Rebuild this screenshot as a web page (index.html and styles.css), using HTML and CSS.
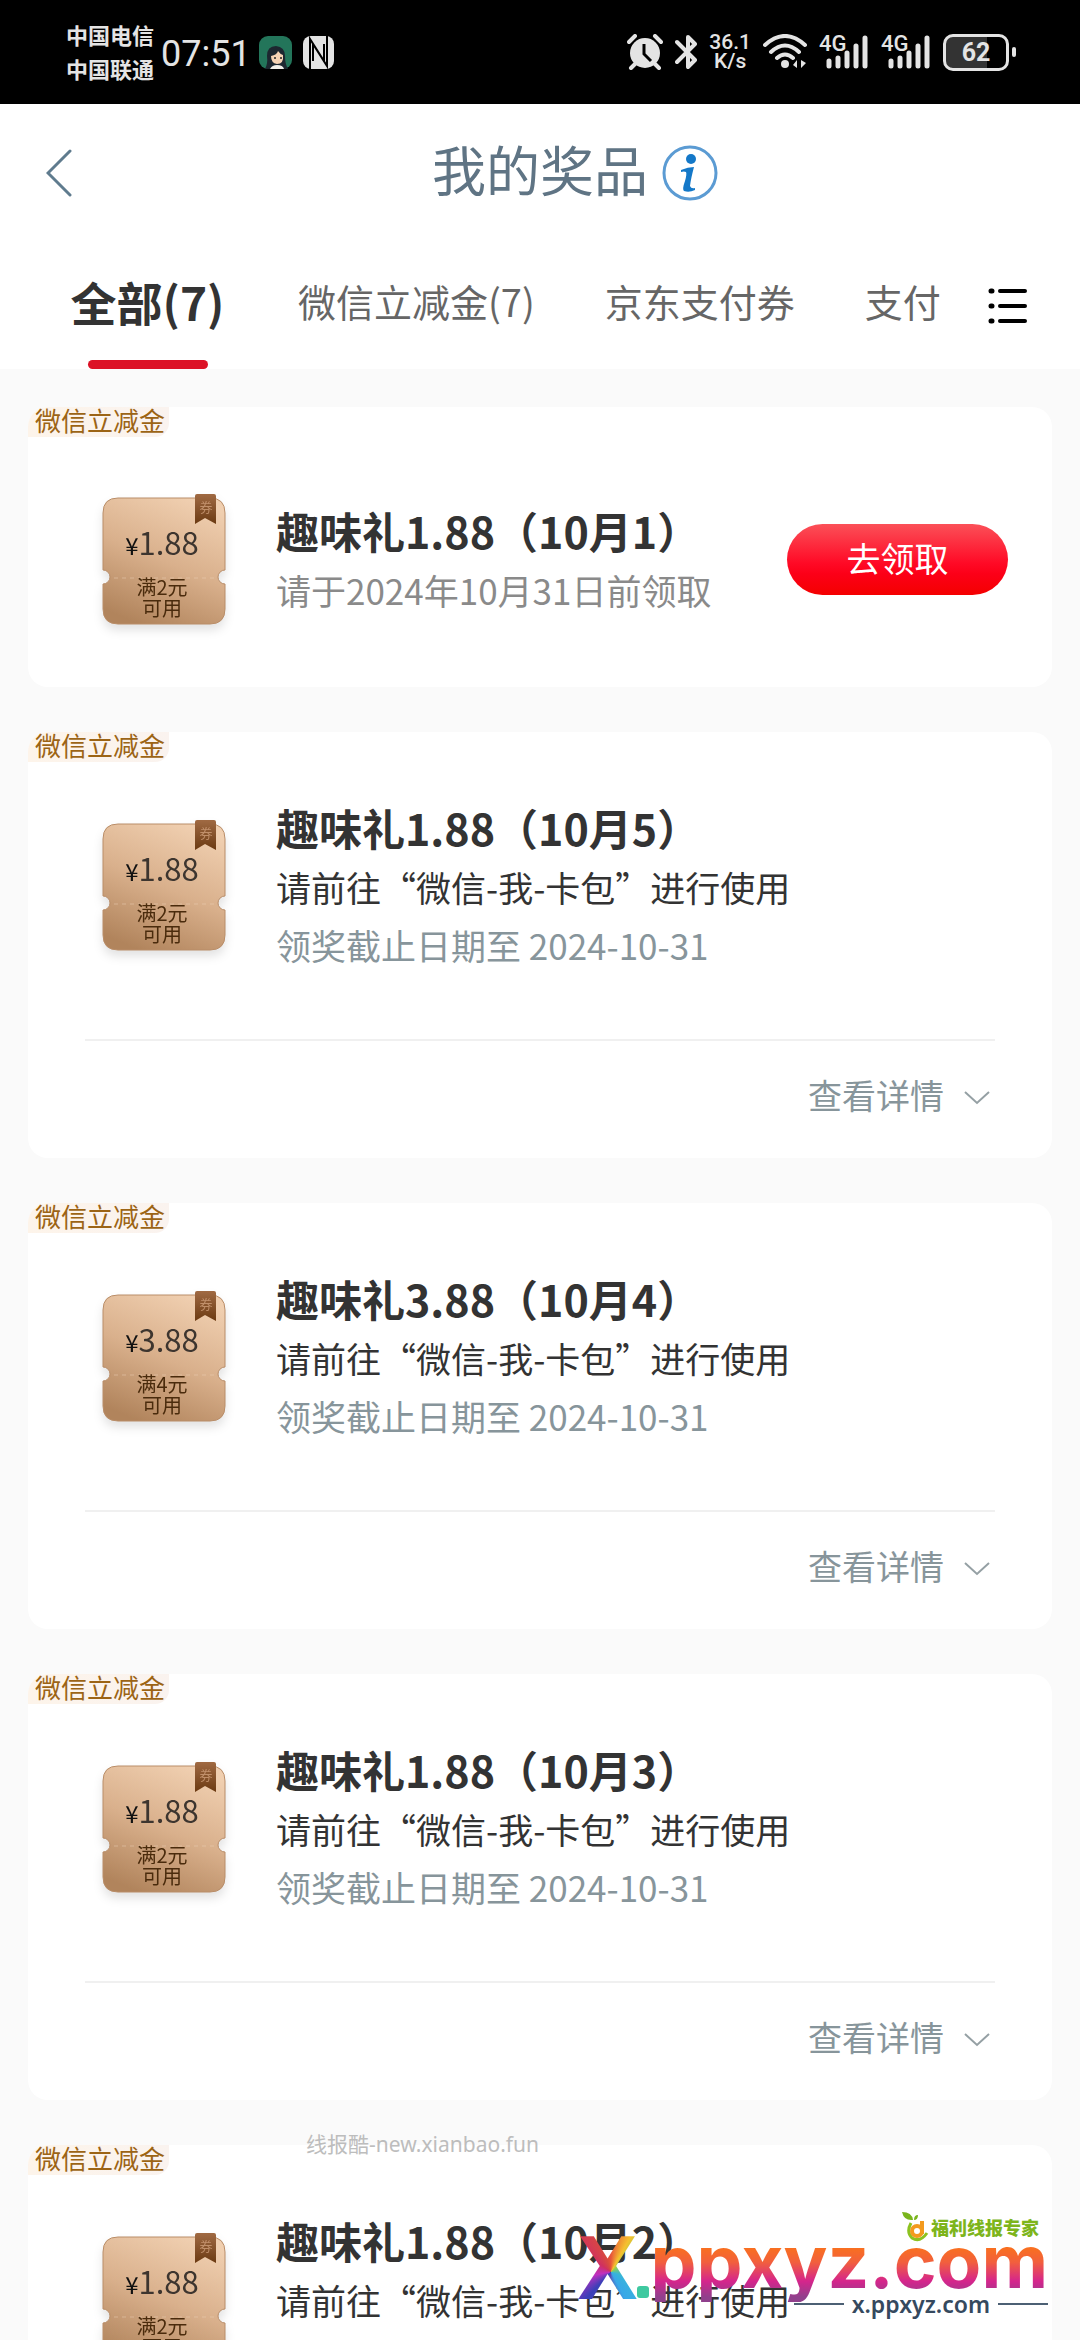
FILE: index.html
```html
<!DOCTYPE html>
<html lang="zh-CN">
<head>
<meta charset="utf-8">
<meta name="viewport" content="width=device-width, initial-scale=1">
<title>我的奖品</title>
<link rel="stylesheet" href="styles.css">
</head>
<body>
<svg class="sprite" aria-hidden="true">
  <defs>
    <linearGradient id="bronze" x1="0.7" y1="0" x2="0.3" y2="1">
      <stop offset="0" stop-color="#f0cfb0"/>
      <stop offset="0.5" stop-color="#d9b08c"/>
      <stop offset="1" stop-color="#b1845c"/>
    </linearGradient>
    <linearGradient id="ribbon" x1="0" y1="0" x2="0" y2="1">
      <stop offset="0" stop-color="#a06a43"/>
      <stop offset="1" stop-color="#6b3a12"/>
    </linearGradient>
  </defs>
  <symbol id="ticket" viewBox="0 0 124 131">
    <path d="M16 4H108Q123 4 123 19V76A7 7 0 0 0 123 90V115Q123 130 108 130H16Q1 130 1 115V90A7 7 0 0 0 1 76V19Q1 4 16 4Z" fill="url(#bronze)" stroke="#b98d68" stroke-width="1"/>
    <path d="M12 84H112" stroke="#ecd0b6" stroke-width="1" stroke-dasharray="4 4" opacity="0.5"/>
    <path d="M93 2Q93 0 95 0H112Q114 0 114 2V30L103 24L93 30Z" fill="url(#ribbon)"/>
    <text x="104" y="18" font-size="13" text-anchor="middle" fill="#d8a884" opacity="0.7">券</text>
  </symbol>
  <symbol id="down" viewBox="0 0 26 14">
    <path d="M1 1L13 12L25 1" fill="none" stroke="#95a0a4" stroke-width="2"/>
  </symbol>
  <symbol id="bars" viewBox="0 0 50 36">
    <g stroke="#e4e4e4" stroke-width="5" stroke-linecap="round">
      <path d="M10 27V32M19 24V32M28 19V32M37 12V32M46 4V32"/>
    </g>
    <text x="0" y="17" font-size="22" font-weight="500" fill="#e4e4e4" class="net">4G</text>
  </symbol>
</svg>

<div class="app">
  <div class="status">
    <div class="carriers"><span>中国电信</span><span>中国联通</span></div>
    <time class="clock">07:51</time>
    <svg class="avatar" viewBox="0 0 33 33" aria-hidden="true">
      <rect width="33" height="33" rx="9" fill="#23755a"/>
      <path d="M6 33Q9 28 8 20Q8 10 17 10Q26 11 26 20Q26 28 29 33Z" fill="#1d2730"/>
      <path d="M12 20Q18 19 19 15Q21 18 24 19Q25 28 18 28Q12 27 12 20Z" fill="#f6d3b4"/>
      <path d="M11 33Q13 29 18 29Q24 29 25 33Z" fill="#f3f0ea"/>
      <circle cx="16" cy="22" r="1" fill="#222"/><circle cx="22" cy="22" r="1" fill="#222"/>
    </svg>
    <svg class="nfc" viewBox="0 0 31 33" aria-hidden="true">
      <rect width="31" height="33" rx="8" fill="#e4e4e4"/>
      <path d="M7 33V3L21 25V8M24 0V30L10 8V25" fill="none" stroke="#000" stroke-width="2"/>
    </svg>
    <div class="indicators">
      <svg class="alarm" viewBox="0 0 36 36" aria-hidden="true">
        <circle cx="18" cy="19" r="15" fill="#e4e4e4"/>
        <path d="M2 8L8 2M34 8L28 2M8 30L4 34M28 30L32 34" stroke="#e4e4e4" stroke-width="4" stroke-linecap="round"/>
        <path d="M17 10V20L24 27" fill="none" stroke="#000" stroke-width="3"/>
      </svg>
      <svg class="bluetooth" viewBox="0 0 22 36" aria-hidden="true">
        <path d="M2 8L20 26L13 33V3L20 10L2 28" fill="none" stroke="#e4e4e4" stroke-width="4" stroke-linejoin="round" stroke-linecap="round"/>
      </svg>
      <div class="speed"><span>36.1</span><span>K/s</span></div>
      <svg class="wifi" viewBox="0 0 44 36" aria-hidden="true">
        <g fill="none" stroke="#e4e4e4" stroke-width="4" stroke-linecap="round">
          <path d="M2 11Q22 -7 42 11M8 18Q22 5 36 18M14 24Q22 17 30 24"/>
        </g>
        <circle cx="22" cy="30" r="4" fill="#e4e4e4"/>
        <path d="M34 26V34L30 31ZM38 26L43 29L38 34Z" fill="#e4e4e4"/>
      </svg>
      <svg class="signal" aria-label="4G"><use href="#bars"/></svg>
      <svg class="signal" aria-label="4G"><use href="#bars"/></svg>
      <div class="battery"><span class="cell">62</span><span class="nub"></span></div>
    </div>
  </div>

  <header class="header">
    <button class="back" aria-label="返回">
      <svg viewBox="0 0 26 48"><path d="M24 2L2 24L24 46" fill="none" stroke="#5f7b8e" stroke-width="3" stroke-linecap="round"/></svg>
    </button>
    <h1>我的奖品</h1>
    <button class="info" aria-label="说明">
      <svg viewBox="0 0 56 56">
        <circle cx="28" cy="28" r="26" fill="#fff" stroke="#5b9bd3" stroke-width="3"/>
        <circle cx="29" cy="14" r="5" fill="#1478c8"/>
        <path d="M19 25Q26 22 32 22Q29 33 28 41Q29 44 33 43L33 45Q27 48 22 46Q20 44 23 36Q25 29 24 27Q22 26 19 27Z" fill="#1478c8"/>
      </svg>
    </button>
  </header>

  <nav class="tabs">
    <div class="tablist">
      <button class="tab active">全部(7)</button>
      <button class="tab">微信立减金(7)</button>
      <button class="tab">京东支付券</button>
      <button class="tab">支付</button>
    </div>
    <button class="menu" aria-label="全部分类">
      <svg viewBox="0 0 40 38"><path d="M12 4H37M12 19H37M12 34H37" stroke="#000" stroke-width="4" stroke-linecap="round"/><path d="M3 4H4M3 19H4M3 34H4" stroke="#000" stroke-width="5" stroke-linecap="round"/></svg>
    </button>
  </nav>

  <main class="list">
    <article class="card">
      <span class="tag">微信立减金</span>
      <div class="row">
        <div class="coupon"><svg><use href="#ticket"/></svg><p class="price"><small>¥</small>1.88</p><p class="rule">满2元<br>可用</p></div>
        <div class="text"><h2>趣味礼1.88（10月1）</h2><p class="muted">请于2024年10月31日前领取</p></div>
        <button class="claim">去领取</button>
      </div>
    </article>

    <article class="card">
      <span class="tag">微信立减金</span>
      <div class="row">
        <div class="coupon"><svg><use href="#ticket"/></svg><p class="price"><small>¥</small>1.88</p><p class="rule">满2元<br>可用</p></div>
        <div class="text"><h2>趣味礼1.88（10月5）</h2><p>请前往“微信-我-卡包”进行使用</p><p class="due">领奖截止日期至 2024-10-31</p></div>
      </div>
      <div class="foot"><button class="more">查看详情<svg><use href="#down"/></svg></button></div>
    </article>

    <article class="card">
      <span class="tag">微信立减金</span>
      <div class="row">
        <div class="coupon"><svg><use href="#ticket"/></svg><p class="price"><small>¥</small>3.88</p><p class="rule">满4元<br>可用</p></div>
        <div class="text"><h2>趣味礼3.88（10月4）</h2><p>请前往“微信-我-卡包”进行使用</p><p class="due">领奖截止日期至 2024-10-31</p></div>
      </div>
      <div class="foot"><button class="more">查看详情<svg><use href="#down"/></svg></button></div>
    </article>

    <article class="card">
      <span class="tag">微信立减金</span>
      <div class="row">
        <div class="coupon"><svg><use href="#ticket"/></svg><p class="price"><small>¥</small>1.88</p><p class="rule">满2元<br>可用</p></div>
        <div class="text"><h2>趣味礼1.88（10月3）</h2><p>请前往“微信-我-卡包”进行使用</p><p class="due">领奖截止日期至 2024-10-31</p></div>
      </div>
      <div class="foot"><button class="more">查看详情<svg><use href="#down"/></svg></button></div>
    </article>

    <article class="card">
      <span class="tag">微信立减金</span>
      <div class="row">
        <div class="coupon"><svg><use href="#ticket"/></svg><p class="price"><small>¥</small>1.88</p><p class="rule">满2元<br>可用</p></div>
        <div class="text"><h2>趣味礼1.88（10月2）</h2><p>请前往“微信-我-卡包”进行使用</p><p class="due">领奖截止日期至 2024-10-31</p></div>
      </div>
      <div class="foot"><button class="more">查看详情<svg><use href="#down"/></svg></button></div>
    </article>
  </main>

  <div class="source">线报酷-new.xianbao.fun</div>

  <div class="brand">
    <div class="slogan">
      <svg viewBox="0 0 27 30" aria-hidden="true">
        <path d="M0 0Q10 0 11 8Q2 9 0 0ZM12 8Q12 3 16 3Q16 8 12 8Z" fill="#7ab51d"/>
        <path d="M9 11Q4 20 10 26Q18 31 25 21" fill="none" stroke="#8cc220" stroke-width="3"/>
        <circle cx="15" cy="19" r="5" fill="none" stroke="#f39a1e" stroke-width="4"/>
        <path d="M20 9V22" stroke="#f39a1e" stroke-width="4"/>
      </svg>
      <span>福利线报专家</span>
    </div>
    <div class="logo"><span class="x">X</span><span class="dot"></span><span class="name">ppxyz.com</span></div>
    <div class="site"><i></i><span>x.ppxyz.com</span><i></i></div>
  </div>
</div>
</body>
</html>
```
FILE: styles.css
```css
* { box-sizing: border-box; }

body, h1, h2, p { margin: 0; }

body {
  font-family: "Noto Sans CJK SC", "Noto Sans", sans-serif;
  color: #333;
  background: #fafafa;
}

button {
  padding: 0;
  border: 0;
  background: none;
  color: inherit;
  font: inherit;
  white-space: nowrap;
}

svg { display: block; flex: none; }

.sprite { position: absolute; width: 0; height: 0; }

.app {
  position: relative;
  display: flex;
  flex-direction: column;
  height: 100vh;
  overflow: hidden;
}

/* status bar */
.status {
  flex: none;
  display: flex;
  align-items: center;
  height: 104px;
  padding: 0 64px 0 66px;
  background: #000;
  color: #e4e4e4;
}
.carriers {
  display: grid;
  font-size: 22px;
  font-weight: 700;
  line-height: 34px;
  padding-bottom: 2px;
}
.clock {
  margin-left: 7px;
  padding-top: 4px;
  font: 400 36px/40px Roboto, sans-serif;
}
.avatar { width: 33px; height: 33px; margin-left: 8px; }
.nfc { width: 31px; height: 33px; margin-left: 11px; }
.indicators {
  display: flex;
  align-items: center;
  gap: 12px;
  margin-left: auto;
}
.alarm { width: 36px; height: 36px; }
.bluetooth { width: 22px; height: 36px; }
.wifi { width: 44px; height: 36px; }
.signal { width: 50px; height: 36px; }
.net { font-family: Roboto, sans-serif; }
.speed {
  display: grid;
  font: 500 21px/19px Roboto, sans-serif;
  text-align: center;
}
.battery { display: flex; align-items: center; gap: 3px; }
.cell {
  width: 66px;
  height: 37px;
  border: 3px solid #e4e4e4;
  border-radius: 10px;
  background: linear-gradient(90deg, #333 68%, #000 68%);
  font: 700 25px/31px Roboto, sans-serif;
  text-align: center;
}
.nub { width: 4px; height: 10px; border-radius: 2px; background: #e4e4e4; }

/* title bar */
.header {
  flex: none;
  display: flex;
  align-items: center;
  justify-content: center;
  gap: 14px;
  height: 138px;
  padding: 0 46px;
  background: #fff;
  color: #5f7484;
}
.back { flex: 1; }
.back svg { width: 26px; height: 48px; }
.header h1 { padding-bottom: 8px; font-size: 54px; font-weight: 400; line-height: 72px; }
.info { flex: 1; }
.info svg { width: 56px; height: 56px; }

/* tabs */
.tabs {
  flex: none;
  display: flex;
  align-items: stretch;
  height: 127px;
  padding: 0 52px 0 67px;
  background: #fff;
}
.tablist {
  flex: 1;
  display: flex;
  gap: 70px;
  min-width: 0;
  overflow: hidden;
}
.tab {
  position: relative;
  padding-bottom: 10px;
  color: #666;
  font-size: 38px;
}
.tab.active { min-width: 161px; color: #333; font-size: 46px; font-weight: 700; }
.tab.active::after {
  content: "";
  position: absolute;
  left: 50%;
  bottom: 0;
  width: 120px;
  height: 9px;
  margin-left: -60px;
  border-radius: 5px;
  background: #dc1226;
}
.menu svg { width: 40px; height: 38px; }

/* prize list */
.list {
  flex: 1;
  display: flex;
  flex-direction: column;
  gap: 45px;
  min-height: 0;
  padding: 38px 28px;
  overflow-y: auto;
  scrollbar-width: none;
}
.card {
  flex: none;
  border-radius: 20px;
  background: #fff;
}
.tag {
  display: block;
  width: max-content;
  height: 30px;
  padding: 0 4px 0 7px;
  border-radius: 20px 0 14px 0;
  background: linear-gradient(90deg, #fdf4ea, #faf3ef);
  color: #9c6415;
  font-size: 26px;
  line-height: 26px;
}
.row {
  display: flex;
  align-items: center;
  height: 250px;
  padding: 0 44px 6px 74px;
}
.card:has(.foot) .row { height: 252px; }
.coupon {
  position: relative;
  flex: none;
  width: 124px;
  height: 131px;
  padding-top: 28px;
  text-align: center;
  filter: drop-shadow(0 6px 5px #0000001c);
}
.coupon svg { position: absolute; top: 0; left: 0; width: 124px; height: 131px; }
.price, .rule { position: relative; }
.price { font-size: 31px; line-height: 40px; color: #3d352f; padding-right: 4px; }
.price small { font-size: 24px; color: #111; }
.rule { margin-top: 11px; font-size: 20px; line-height: 21px; color: #4a2b0c; padding-right: 4px; }
.text { flex: 1; margin-left: 50px; font-size: 35px; line-height: 58px; white-space: nowrap; }
.text h2 { font-size: 43px; line-height: 62px; }
.muted { color: #8a8a8a; }
.due { color: #87959b; }
.claim {
  width: 221px;
  height: 71px;
  padding-bottom: 4px;
  border-radius: 36px;
  background: linear-gradient(#fb5058, #ff0a26 55%, #fc0018 70%, #f40000);
  color: #fff;
  font-size: 34px;
}
.foot {
  display: flex;
  justify-content: flex-end;
  height: 119px;
  margin: 25px 57px 0 57px;
  padding: 25px 5px 0 0;
  border-top: 2px solid #f0f0f0;
}
.more {
  display: flex;
  align-items: center;
  gap: 20px;
  height: 56px;
  color: #87959b;
  font-size: 34px;
}
.more svg { width: 26px; height: 14px; margin-top: 8px; }

/* overlaid marks */
.source {
  position: absolute;
  left: 306px;
  bottom: 182px;
  color: #bdbdbd;
  font: 21px/28px "Noto Sans", "Noto Sans CJK SC", sans-serif;
}
.brand {
  position: absolute;
  right: 32px;
  bottom: 20px;
  display: flex;
  flex-direction: column;
  align-items: flex-end;
}
.slogan {
  display: flex;
  align-items: center;
  gap: 2px;
  height: 30px;
  padding-right: 9px;
  color: #7db51c;
  font-size: 18px;
  font-weight: 900;
}
.slogan svg { width: 27px; height: 30px; }
.logo {
  display: flex;
  align-items: flex-end;
  height: 60px;
  margin-bottom: -14px;
  font-weight: 700;
}
.x {
  margin: 0 -1px -6px 0;
  background: conic-gradient(from 0deg at 55% 55%, #e8553a, #f5c12e 8%, #8fcf50 14%, #37b6d8 30%, #38a8e8 42%, #5a4bb0 52%, #3a3fb8 62%, #c02fc0 72%, #d03060 85%, #d84a40 95%, #e8553a);
  background-clip: text;
  color: transparent;
  font: 700 90px/80px "Liberation Sans", sans-serif;
}
.dot {
  width: 12px;
  height: 12px;
  margin: 0 2px 4px 0;
  border-radius: 3px;
  background: #3fc9a0;
}
.name {
  background: linear-gradient(#f9701f 32%, #f2603c 50%, #d5258c 74%, #90408c 94%);
  background-clip: text;
  color: transparent;
  font: 700 73px/80px Inter, sans-serif;
}
.site {
  display: flex;
  align-items: center;
  gap: 8px;
  height: 32px;
  color: #35495e;
  font: 600 23px/32px "Noto Sans", sans-serif;
}
.site i { width: 50px; height: 2px; background: #4c6074; }
```
